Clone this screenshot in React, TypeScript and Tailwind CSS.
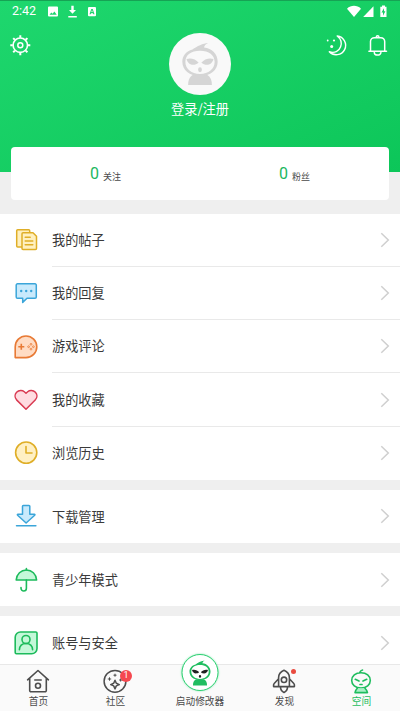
import type { ReactNode } from 'react';
import clsx from 'clsx';

const ICON = 'h-[26px] w-[26px] shrink-0';

function PostsIcon() {
  return (
    <svg viewBox="0 0 26 26" className={ICON} fill="#fff0bf" stroke="#dfae27" strokeWidth="1.5" strokeLinejoin="round">
      <rect x="3.7" y="2.8" width="13" height="17.2" rx="1" />
      <path d="M10 5.8H20L23.5 9.3V21.6a1 1 0 0 1-1 1H10a1 1 0 0 1-1-1V6.8a1 1 0 0 1 1-1Z" />
      <path d="M12.2 10.2h5M12.2 14h7.6M12.2 17.8h7.6" strokeLinecap="round" />
    </svg>
  );
}

function ReplyIcon() {
  return (
    <svg viewBox="0 0 26 26" className={ICON}>
      <path
        d="M4.5 3.8H22a1.3 1.3 0 0 1 1.3 1.3V17a1.3 1.3 0 0 1-1.3 1.3H14L9.7 22.4V18.3H4.5A1.3 1.3 0 0 1 3.2 17V5.1A1.3 1.3 0 0 1 4.5 3.8Z"
        fill="#c9eafc"
        stroke="#3ba5d9"
        strokeWidth="1.5"
        strokeLinejoin="round"
      />
      <g fill="#3ba5d9">
        <circle cx="8.2" cy="11" r="1.2" />
        <circle cx="13.2" cy="11" r="1.2" />
        <circle cx="18.2" cy="11" r="1.2" />
      </g>
    </svg>
  );
}

function GameIcon() {
  return (
    <svg viewBox="0 0 26 26" className={ICON}>
      <path
        d="M2.2 23.6V12.8A10.8 10.8 0 1 1 13 23.6Z"
        fill="#ffdcc4"
        stroke="#e87a35"
        strokeWidth="1.6"
        strokeLinejoin="round"
      />
      <path d="M8.3 9.8v6M5.3 12.8h6" stroke="#e87a35" strokeWidth="1.6" />
      <g fill="none" stroke="#e87a35" strokeWidth="0.8">
        <circle cx="18" cy="10.3" r="0.9" />
        <circle cx="18" cy="15.1" r="0.9" />
        <circle cx="15.6" cy="12.7" r="0.9" />
        <circle cx="20.4" cy="12.7" r="0.9" />
      </g>
    </svg>
  );
}

function HeartIcon() {
  return (
    <svg viewBox="0 0 26 26" className={ICON}>
      <path
        d="M13 22.3 3.8 13.1C1.5 10.7 1.6 7.4 3.6 5.3 5.9 3 9.3 3 11.3 4.7L13 6.3 14.7 4.7C16.7 3 20.1 3 22.4 5.3 24.4 7.4 24.5 10.7 22.2 13.1Z"
        fill="#ffdce1"
        stroke="#d93a52"
        strokeWidth="1.5"
        strokeLinejoin="round"
      />
    </svg>
  );
}

function ClockIcon() {
  return (
    <svg viewBox="0 0 26 26" className={ICON} stroke="#dfae27" strokeWidth="1.6">
      <circle cx="13.2" cy="12.6" r="10.6" fill="#fff0c4" />
      <path d="M13 6.5V13h6" fill="none" strokeLinecap="round" strokeLinejoin="round" />
    </svg>
  );
}

function DownloadIcon() {
  return (
    <svg viewBox="0 0 26 26" className={ICON} stroke="#3ba5d9" strokeWidth="1.5" strokeLinecap="round" strokeLinejoin="round">
      <path
        d="M10.300 2.500H16a.8.8 0 0 1 .8.8V11.300H21.300a.5.5 0 0 1 .4.9L13.100 20 4.600 12.200a.5.5 0 0 1 .4-.9H9.500V3.300a.8.8 0 0 1 .8-.8Z"
        fill="#c9eafc"
      />
      <path d="M3.500 22.700h19.400" fill="none" />
    </svg>
  );
}

function UmbrellaIcon() {
  return (
    <svg viewBox="0 0 26 26" className={ICON} stroke="#1dbb5c" strokeWidth="1.6" strokeLinecap="round" strokeLinejoin="round">
      <path d="M3.200 13C3.600 7 8 3 13.400 3S23.200 7 23.600 13Z" fill="#c4f8d9" />
      <path d="M13.400 1.500V3M13.400 13V21.300a2.700 2.700 0 0 1-5.400 0V20.500" fill="none" />
    </svg>
  );
}

function AccountIcon() {
  return (
    <svg viewBox="0 0 26 26" className={ICON} stroke="#1dbb5c" strokeWidth="1.6" strokeLinecap="round" strokeLinejoin="round">
      <path
        d="M7.500 2H22.800a1.200 1.200 0 0 1 1.200 1.200V18.500A5.300 5.300 0 0 1 18.700 23.800H3.400a1.200 1.200 0 0 1-1.200-1.200V7.300A5.300 5.300 0 0 1 7.500 2Z"
        fill="#c4f8d9"
      />
      <circle cx="13" cy="9.5" r="4" fill="none" />
      <path d="M6.400 19.800C6.600 16 9.200 13.500 13 13.500S19.400 16 19.600 19.800" fill="none" />
    </svg>
  );
}

const groups: { label: string; icon: ReactNode }[][] = [
  [
    { label: '我的帖子', icon: <PostsIcon /> },
    { label: '我的回复', icon: <ReplyIcon /> },
    { label: '游戏评论', icon: <GameIcon /> },
    { label: '我的收藏', icon: <HeartIcon /> },
    { label: '浏览历史', icon: <ClockIcon /> },
  ],
  [{ label: '下载管理', icon: <DownloadIcon /> }],
  [{ label: '青少年模式', icon: <UmbrellaIcon /> }],
  [{ label: '账号与安全', icon: <AccountIcon /> }],
];

// Mascot head used for the avatar and the launch button
function Mascot({ className, body, face }: { className: string; body: string; face: string }) {
  return (
    <svg viewBox="0 0 40 46" className={className}>
      <path d="M7.500 45C7.500 38.500 10 35.500 13.500 34H26.500C30 35.500 32.500 38.500 32.500 45Z" fill={body} />
      <path
        fillRule="evenodd"
        d="M12 7.800C17 4.500 23 1.200 28.500 1 25.800 2.300 24.500 4 24.300 5.600 32.500 6.400 38.600 12.500 38.600 20.500 38.600 29.500 31 35.500 20 35.500S1.400 29.500 1.400 20.500C1.400 14.500 5.500 9.500 12 7.800ZM20 9C10.500 9 4.600 13.500 4.600 20.800S11 33.400 20 33.400 35.400 28 35.400 20.800 29.500 9 20 9Z"
        fill={body}
      />
      <g fill={face}>
        <path d="M5.800 17.800C10 16.300 15.500 17.800 18.600 21.700 14.500 25 7.500 25 5.800 17.800Z" />
        <path d="M34.200 17.800C30 16.300 24.500 17.800 21.400 21.700 25.500 25 32.500 25 34.200 17.800Z" />
        <ellipse cx="20" cy="29" rx="2" ry="2.600" />
      </g>
    </svg>
  );
}

function StatusBar() {
  return (
    <div className="flex h-[21px] items-center px-[13px] text-white">
      <span className="-ml-px w-[35px] font-['Roboto',sans-serif] text-[12.5px] leading-none">2:42</span>
      <svg viewBox="0 0 50 13" className="h-[13px] w-[50px]" fill="currentColor">
        <path
          fillRule="evenodd"
          d="M2 1.500H10a1 1 0 0 1 1 1V10.500a1 1 0 0 1-1 1H2a1 1 0 0 1-1-1V2.500a1 1 0 0 1 1-1ZM2.500 9.800H9.700L7.400 6.600 5.600 8.800 4.300 7.400Z"
        />
        <path d="M24.300 0.800h2.400V5H29l-3.500 3.800L22 5h2.300ZM21.300 11h8.500v1.500h-8.500Z" />
        <path
          fillRule="evenodd"
          d="M42 2H48a1 1 0 0 1 1 1V10.200a1 1 0 0 1-1 1H42a1 1 0 0 1-1-1V3a1 1 0 0 1 1-1ZM44.300 3.900 42.500 9.300H43.700L44 8.200H46L46.300 9.300H47.500L45.700 3.900ZM44.300 7.100 45 5.100 45.700 7.100Z"
        />
      </svg>
      <svg viewBox="0 0 40 13" className="ml-auto h-[13px] w-[40px]" fill="currentColor">
        <path d="M0 3.700C4-0.100 10-0.100 14 3.700L7 12Z" />
        <path d="M26.500 1.300V12H16.200Z" />
        <path fillRule="evenodd" d="M35 0.500h3V1.800H39.500V12H33.300V1.800H35ZM37 3.200 34.500 7.500H36V10.800L38.400 6.300H37Z" />
      </svg>
    </div>
  );
}

function ProfileHeader() {
  return (
    <header className="h-[172px] shrink-0 border-t border-[#16a354] bg-linear-to-br from-[#1ed76e] to-[#0cc659]">
      <StatusBar />
      <div className="flex justify-between px-[10px] pt-[11px] text-white">
        <svg viewBox="0 0 22 24" className="h-6 w-[22px]" fill="none" stroke="currentColor">
          <circle cx="10.300" cy="12.200" r="7.200" strokeWidth="1.600" />
          <circle cx="10.300" cy="12.200" r="2.500" strokeWidth="1.500" />
          <path
            d="M10.300 2.200v2.500M10.300 19.700v2.500M0.300 12.200h2.500M17.800 12.200h2.500M3.200 5.100l1.700 1.700M15.700 17.600l1.700 1.700M3.200 19.300l1.700-1.700M15.700 6.800l1.700-1.700"
            strokeWidth="2"
          />
        </svg>
        <div className="ml-[42px] flex flex-col items-center">
          <div className="flex h-[62px] w-[62px] items-center justify-center rounded-full bg-[#f9f9f9]">
            <Mascot className="h-[44px] w-[38px]" body="#d5d5d5" face="#d5d5d5" />
          </div>
          <p className="mt-1 text-[13.200px] leading-5">登录/注册</p>
        </div>
        <div className="flex gap-[18px]">
          <svg viewBox="0 0 24 24" className="h-6 w-6" fill="none" stroke="currentColor">
            <path
              d="M11.200 3A9.400 9.400 0 1 1 3.300 18.700C8.500 20.500 13 18.300 14.600 13.800 16 9.700 14.500 5.500 11.200 3Z"
              strokeWidth="1.400"
              strokeLinejoin="round"
            />
            <g fill="currentColor" stroke="none">
              <circle cx="1.700" cy="7.500" r="0.900" />
              <circle cx="8" cy="7.500" r="1.100" />
              <circle cx="5.700" cy="13.600" r="1.500" />
            </g>
          </svg>
          <svg
            viewBox="0 0 22 24"
            className="h-6 w-[22px]"
            fill="none"
            stroke="currentColor"
            strokeWidth="1.500"
            strokeLinecap="round"
            strokeLinejoin="round"
          >
            <path d="M2.500 18V8.500A3.800 3.800 0 0 1 6.300 4.700H12.900A3.800 3.800 0 0 1 16.700 8.500V18M0.900 18.200H18.500M6.300 19.500A3.300 2.600 0 0 0 12.900 19.500M8.300 4a1.300 1.300 0 0 1 2.600 0" />
          </svg>
        </div>
      </div>
    </header>
  );
}

function Stat({ value, label }: { value: number; label: string }) {
  return (
    <div className="flex flex-1 items-center justify-center gap-1">
      <span className="font-['Roboto',sans-serif] text-[16px] leading-5 text-[#20b760]">{value}</span>
      <span className="pt-[6px] text-[9px] text-[#4a4a4a]">{label}</span>
    </div>
  );
}

function MenuRow({ label, icon, divided }: { label: string; icon: ReactNode; divided: boolean }) {
  return (
    <div className="flex h-[53.300px] shrink-0 items-center pl-[13px]">
      {icon}
      <div
        className={clsx(
          'ml-[13px] flex h-full flex-1 items-center justify-between pr-[10px]',
          divided && 'border-b border-[#e9e9e9]',
        )}
      >
        <span className="text-[13.200px] text-[#3a3a3a]">{label}</span>
        <svg viewBox="0 0 10 16" className="h-4 w-[10px]" fill="none" stroke="#cfcfcf" strokeWidth="1.500">
          <path d="M1.300 1.200 8.300 8 1.300 14.800" />
        </svg>
      </div>
    </div>
  );
}

function HomeIcon() {
  return (
    <svg viewBox="0 0 26 26" className={ICON} fill="none" stroke="#4d4d4d" strokeWidth="1.600" strokeLinecap="round" strokeLinejoin="round">
      <path d="M2.600 11.800 13 2.500 23.400 11.800M4.700 10.500V22.500a1.300 1.300 0 0 0 1.300 1.300H20a1.300 1.300 0 0 0 1.300-1.300V10.500M9.800 12h6.400" />
      <circle cx="13" cy="17.800" r="2.500" />
    </svg>
  );
}

function CommunityIcon() {
  return (
    <svg viewBox="0 0 26 26" className={ICON} fill="none" stroke="#4d4d4d" strokeWidth="1.500" strokeLinejoin="round">
      <circle cx="13" cy="13.300" r="10.900" />
      <path d="M13 12.300 14.300 15.300 17.300 16.600 14.300 17.900 13 20.900 11.700 17.900 8.700 16.600 11.700 15.300Z" />
      <path d="M7.500 9.300v3.400M5.800 11h3.400M13 5.700v3M11.500 7.200h3M18.600 10.500v3M17.100 12h3" strokeWidth="1" />
    </svg>
  );
}

function RocketIcon() {
  return (
    <svg viewBox="0 0 26 26" className={ICON} fill="none" stroke="#4d4d4d" strokeWidth="1.600" strokeLinecap="round" strokeLinejoin="round">
      <path d="M7.600 18.600V9.500C7.600 6.500 9.500 3.800 13 2.200 16.500 3.800 18.400 6.500 18.400 9.500V18.600ZM7.600 10.800 3.200 15.500A2 2 0 0 0 2.600 17V18.600H7.600M18.400 10.800 22.800 15.500A2 2 0 0 1 23.400 17V18.600H18.400M9.500 19C9.500 21.500 11 23.500 13 24.500 15 23.500 16.500 21.500 16.500 19" />
      <circle cx="13" cy="11.800" r="2.700" />
    </svg>
  );
}

function SpaceIcon() {
  return (
    <svg viewBox="0 0 26 26" className={ICON} fill="none" stroke="#1fbd5e" strokeWidth="1.600" strokeLinecap="round" strokeLinejoin="round">
      <path d="M11.500 4.800C12 3.500 13 2.400 14.500 2M13 4.800C18.500 4.800 22.300 8 22.300 12.500S18.500 20 13 20 3.700 17 3.700 12.500 7.500 4.800 13 4.800Z" />
      <path d="M9.300 20.200C8 21.500 7.200 23 7 24.600H19.500C19.200 23 18.300 21.500 17 20.200" fill="#a9f0c6" />
      <path d="M7.300 11.300 11 13M18.700 11.300 15 13M12 16.500H14" strokeWidth="1.700" />
    </svg>
  );
}

function Tab({ label, icon, badge, active }: { label: string; icon: ReactNode; badge?: ReactNode; active?: boolean }) {
  return (
    <div className="flex flex-1 flex-col items-center pt-[3px]">
      <div className="relative -ml-px -mt-[0.500px]">
        {icon}
        {badge}
      </div>
      <span className={clsx('text-[9.700px] leading-[14px]', active ? 'text-[#1fbd5e]' : 'text-[#4a4a4a]')}>{label}</span>
    </div>
  );
}

function BottomNav() {
  return (
    <nav className="relative flex h-[47px] shrink-0 border-t border-[#e8e8e8] bg-[#fafafa]">
      <Tab label="首页" icon={<HomeIcon />} />
      <Tab
        label="社区"
        icon={<CommunityIcon />}
        badge={
          <span className="absolute left-[18px] top-[2px] flex h-3 w-3 items-center justify-center rounded-full bg-[#f5484f] font-['Roboto',sans-serif] text-[9px] text-white">
            1
          </span>
        }
      />
      <div className="flex w-[92px] flex-col items-center justify-end pb-[3px]">
        <div className="absolute left-1/2 top-[-11px] flex h-[37px] w-[37px] -translate-x-1/2 items-center justify-center rounded-full border border-[#2fd073] bg-white shadow-[0_0_2px_#7be5a8]">
          <Mascot className="h-[26px] w-[23px]" body="#20bd60" face="#222222" />
        </div>
        <span className="text-[9.700px] leading-[14px] text-[#4a4a4a]">启动修改器</span>
      </div>
      <Tab
        label="发现"
        icon={<RocketIcon />}
        badge={<span className="absolute left-5 top-[1px] h-[5px] w-[5px] rounded-full bg-[#e94b3f]" />}
      />
      <Tab label="空间" icon={<SpaceIcon />} active />
    </nav>
  );
}

export default function App() {
  return (
    <div className="flex h-[711px] w-[400px] flex-col overflow-hidden bg-[#efefef] font-['Noto_Sans_CJK_SC',sans-serif]">
      <ProfileHeader />
      <section className="relative mx-[11px] -mt-[25px] mb-[13.500px] flex h-[53px] shrink-0 items-center rounded-[4px] bg-white">
        <Stat value={0} label="关注" />
        <Stat value={0} label="粉丝" />
      </section>
      <main className="flex min-h-0 flex-1 flex-col gap-[9.800px] overflow-hidden">
        {groups.map((rows) => (
          <section key={rows[0].label} className="shrink-0 bg-white">
            {rows.map((row, i) => (
              <MenuRow key={row.label} label={row.label} icon={row.icon} divided={i < rows.length - 1} />
            ))}
          </section>
        ))}
      </main>
      <BottomNav />
    </div>
  );
}
